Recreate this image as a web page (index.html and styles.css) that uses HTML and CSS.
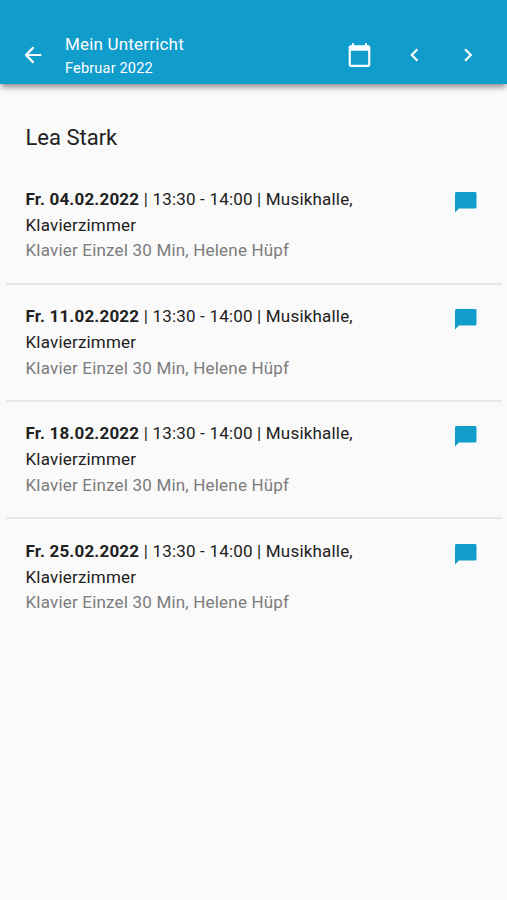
FILE: index.html
```html
<!DOCTYPE html>
<html lang="de">
<head>
<meta charset="utf-8">
<title>Mein Unterricht</title>
<link rel="stylesheet" href="styles.css">
</head>
<body>
<header class="bar">
  <svg class="back" viewBox="0 0 24 24"><path d="M19 11H7.830l4.880-4.880a1 1 0 0 0-1.420-1.410l-6.580 6.580a1 1 0 0 0 0 1.420l6.580 6.580a1 1 0 0 0 1.420-1.410L7.830 13H19a1 1 0 0 0 0-2z"/></svg>
  <div class="titles"><h1 class="title">Mein Unterricht</h1><p class="subtitle">Februar 2022</p></div>
  <svg class="calendar" viewBox="0 0 24 24"><path d="M20 3h-1V2a1 1 0 0 0-2 0v1H7V2a1 1 0 0 0-2 0v1H4c-1.100 0-2 .9-2 2v16c0 1.100.9 2 2 2h16c1.100 0 2-.9 2-2V5c0-1.100-.9-2-2-2zm0 18H4V8h16z"/></svg>
  <svg class="chevron prev" viewBox="0 0 24 24"><path d="M15.410 7.410 14 6l-6 6 6 6 1.410-1.410L10.830 12z"/></svg>
  <svg class="chevron next" viewBox="0 0 24 24"><path d="M10 6 8.590 7.410 13.170 12l-4.580 4.590L10 18l6-6z"/></svg>
</header>
<main>
  <h2 class="name">Lea Stark</h2>
  <ul class="lessons">
    <li class="lesson"><div class="text"><p><b>Fr. 04.02.2022</b> | 13:30 - 14:00 | Musikhalle,<br>Klavierzimmer</p><p class="detail">Klavier Einzel 30 Min, Helene Hüpf</p></div><svg class="chat" viewBox="0 0 22 21"><path d="M1.500 0h19A1.500 1.500 0 0 1 22 1.500v14a1.500 1.500 0 0 1-1.500 1.500H4L0 21V1.500A1.500 1.500 0 0 1 1.500 0z"/></svg></li>
    <li class="lesson"><div class="text"><p><b>Fr. 11.02.2022</b> | 13:30 - 14:00 | Musikhalle,<br>Klavierzimmer</p><p class="detail">Klavier Einzel 30 Min, Helene Hüpf</p></div><svg class="chat" viewBox="0 0 22 21"><path d="M1.500 0h19A1.500 1.500 0 0 1 22 1.500v14a1.500 1.500 0 0 1-1.500 1.500H4L0 21V1.500A1.500 1.500 0 0 1 1.500 0z"/></svg></li>
    <li class="lesson"><div class="text"><p><b>Fr. 18.02.2022</b> | 13:30 - 14:00 | Musikhalle,<br>Klavierzimmer</p><p class="detail">Klavier Einzel 30 Min, Helene Hüpf</p></div><svg class="chat" viewBox="0 0 22 21"><path d="M1.500 0h19A1.500 1.500 0 0 1 22 1.500v14a1.500 1.500 0 0 1-1.500 1.500H4L0 21V1.500A1.500 1.500 0 0 1 1.500 0z"/></svg></li>
    <li class="lesson"><div class="text"><p><b>Fr. 25.02.2022</b> | 13:30 - 14:00 | Musikhalle,<br>Klavierzimmer</p><p class="detail">Klavier Einzel 30 Min, Helene Hüpf</p></div><svg class="chat" viewBox="0 0 22 21"><path d="M1.500 0h19A1.500 1.500 0 0 1 22 1.500v14a1.500 1.500 0 0 1-1.500 1.500H4L0 21V1.500A1.500 1.500 0 0 1 1.500 0z"/></svg></li>
  </ul>
</main>
</body>
</html>
```
FILE: styles.css
```css
* { box-sizing: border-box; margin: 0; padding: 0; }
body { min-height: 900px; background: #fafafa; color: #212121; font: 17px/25.700px Roboto, sans-serif; letter-spacing: .19px; }
svg { display: block; flex: none; fill: currentColor; }
.bar { display: flex; align-items: center; height: 84px; padding: 26px 26px 0 20px; background: #109dcc; color: #fff; box-shadow: 0 4px 6px -1px rgba(0,0,0,.45); }
.back { width: 26px; height: 26px; }
.titles { flex: 1; padding: 2px 0 0 19px; }
.title { font-size: 17px; line-height: 24px; font-weight: 400; }
.subtitle { font-size: 14.500px; line-height: 25px; }
.calendar { width: 26px; height: 26px; margin-right: 29px; }
.chevron { width: 26px; height: 26px; }
.prev { margin-right: 27px; }
.calendar, .prev { transform: translateX(-.5px); }
.name { padding: 38px 25.500px 0; font-size: 22px; line-height: 32px; font-weight: 400; letter-spacing: 0; }
.lessons { list-style: none; padding: 13.300px 5px 0 6px; }
.lesson { display: flex; justify-content: space-between; height: 117.350px; padding: 19.500px 25.500px 0 19.500px; border-bottom: 2px solid #e8e8e8; }
.lesson:last-child { border-bottom: 0; }
.detail { color: #7c7c7c; }
.chat { width: 21.500px; height: 20.500px; margin-top: 5px; color: #109dcc; }
```
